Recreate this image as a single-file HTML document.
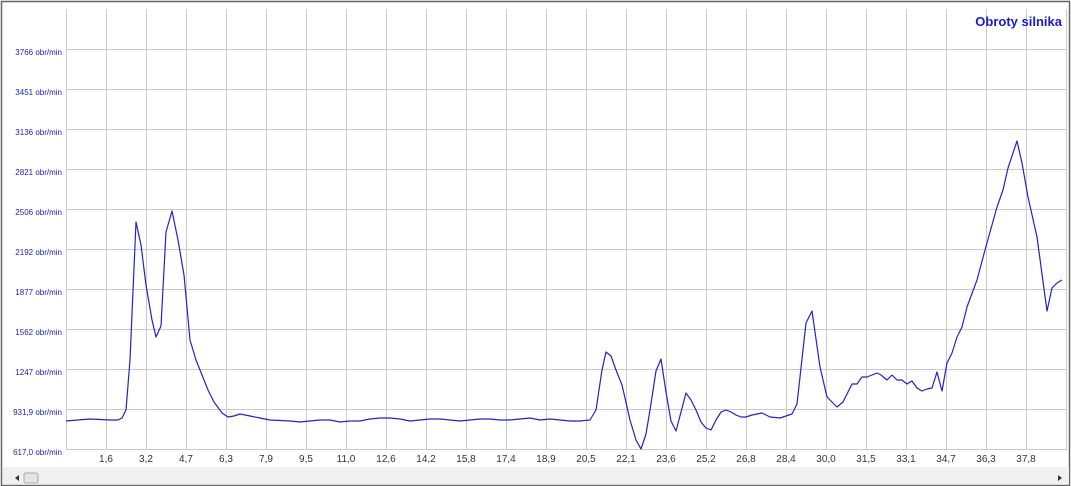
<!DOCTYPE html>
<html><head><meta charset="utf-8"><style>
body{margin:0;background:#fff;width:1071px;height:486px;overflow:hidden;font-family:"Liberation Sans",sans-serif}
</style></head><body>
<svg width="1071" height="486" xmlns="http://www.w3.org/2000/svg" style="position:absolute;left:0;top:0">
<rect x="1.5" y="1.5" width="1068" height="484" fill="#fff" stroke="#666" stroke-width="1.5"/>
<g stroke="#cbcbcb" stroke-width="1">
<line x1="66.5" y1="9" x2="66.5" y2="449"/><line x1="106.5" y1="9" x2="106.5" y2="449"/><line x1="146.5" y1="9" x2="146.5" y2="449"/><line x1="186.5" y1="9" x2="186.5" y2="449"/><line x1="226.5" y1="9" x2="226.5" y2="449"/><line x1="266.5" y1="9" x2="266.5" y2="449"/><line x1="306.5" y1="9" x2="306.5" y2="449"/><line x1="346.5" y1="9" x2="346.5" y2="449"/><line x1="386.5" y1="9" x2="386.5" y2="449"/><line x1="426.5" y1="9" x2="426.5" y2="449"/><line x1="466.5" y1="9" x2="466.5" y2="449"/><line x1="506.5" y1="9" x2="506.5" y2="449"/><line x1="546.5" y1="9" x2="546.5" y2="449"/><line x1="586.5" y1="9" x2="586.5" y2="449"/><line x1="626.5" y1="9" x2="626.5" y2="449"/><line x1="666.5" y1="9" x2="666.5" y2="449"/><line x1="706.5" y1="9" x2="706.5" y2="449"/><line x1="746.5" y1="9" x2="746.5" y2="449"/><line x1="786.5" y1="9" x2="786.5" y2="449"/><line x1="826.5" y1="9" x2="826.5" y2="449"/><line x1="866.5" y1="9" x2="866.5" y2="449"/><line x1="906.5" y1="9" x2="906.5" y2="449"/><line x1="946.5" y1="9" x2="946.5" y2="449"/><line x1="986.5" y1="9" x2="986.5" y2="449"/><line x1="1026.5" y1="9" x2="1026.5" y2="449"/><line x1="1066.5" y1="9" x2="1066.5" y2="449"/>
<line x1="66" y1="49.5" x2="1067" y2="49.5"/><line x1="66" y1="89.5" x2="1067" y2="89.5"/><line x1="66" y1="129.5" x2="1067" y2="129.5"/><line x1="66" y1="169.5" x2="1067" y2="169.5"/><line x1="66" y1="209.5" x2="1067" y2="209.5"/><line x1="66" y1="249.5" x2="1067" y2="249.5"/><line x1="66" y1="289.5" x2="1067" y2="289.5"/><line x1="66" y1="329.5" x2="1067" y2="329.5"/><line x1="66" y1="369.5" x2="1067" y2="369.5"/><line x1="66" y1="409.5" x2="1067" y2="409.5"/><line x1="66" y1="449.5" x2="1067" y2="449.5"/>
</g>
<g fill="#2020c0" font-size="8" text-anchor="end">
<text x="62" y="55">3766 obr/min</text><text x="62" y="95">3451 obr/min</text><text x="62" y="135">3136 obr/min</text><text x="62" y="175">2821 obr/min</text><text x="62" y="215">2506 obr/min</text><text x="62" y="255">2192 obr/min</text><text x="62" y="295">1877 obr/min</text><text x="62" y="335">1562 obr/min</text><text x="62" y="375">1247 obr/min</text><text x="62" y="415">931,9 obr/min</text><text x="62" y="455">617,0 obr/min</text>
</g>
<g fill="#333" font-size="10" text-anchor="middle">
<text x="106" y="462">1,6</text><text x="146" y="462">3,2</text><text x="186" y="462">4,7</text><text x="226" y="462">6,3</text><text x="266" y="462">7,9</text><text x="306" y="462">9,5</text><text x="346" y="462">11,0</text><text x="386" y="462">12,6</text><text x="426" y="462">14,2</text><text x="466" y="462">15,8</text><text x="506" y="462">17,4</text><text x="546" y="462">18,9</text><text x="586" y="462">20,5</text><text x="626" y="462">22,1</text><text x="666" y="462">23,6</text><text x="706" y="462">25,2</text><text x="746" y="462">26,8</text><text x="786" y="462">28,4</text><text x="826" y="462">30,0</text><text x="866" y="462">31,5</text><text x="906" y="462">33,1</text><text x="946" y="462">34,7</text><text x="986" y="462">36,3</text><text x="1026" y="462">37,8</text>
</g>
<text x="1062" y="26" fill="#1a1ad0" font-size="13" font-weight="bold" text-anchor="end">Obroty silnika</text>
<polyline fill="none" stroke="#2222cc" stroke-width="1.2" stroke-linejoin="round" points="66,421 90,419 110,420 118,420 122,418 126,410 130,360 136,222 141,245 146,285 152,320 156,337 161,326 166,232 172,211 178,240 184,275 190,340 196,360 202,375 208,390 214,402 222,413 228,417 234,416 240,414 250,416 260,418 270,420 290,421 300,422 310,421 320,420 330,420 340,422 350,421 360,421 370,419 380,418 390,418 400,419 410,421 420,420 430,419 440,419 450,420 460,421 470,420 480,419 490,419 500,420 510,420 520,419 530,418 540,420 550,419 560,420 570,421 580,421 590,420 596,410 602,370 606,352 611,356 616,370 622,385 630,420 636,440 641,449 646,434 650,410 656,371 661,359 666,392 671,421 676,431 681,412 686,393 691,400 696,410 701,422 706,428 711,430 716,420 721,412 726,410 731,412 736,415 741,417 746,417 752,415 762,413 770,417 780,418 792,414 797,404 806,323 812,311 820,367 827,397 837,407 843,402 852,384 857,384 862,377 867,377 877,373 881,375 887,380 892,375 897,380 902,380 907,384 912,381 917,388 922,391 927,389 932,388 937,372 942,391 947,363 952,353 957,337 962,327 967,307 977,280 985,250 997,207 1003,190 1008,168 1017,141 1022,163 1028,197 1037,237 1047,311 1052,288 1057,283 1062,280"/>
<rect x="3" y="467" width="1066" height="17" fill="#f0f0f0"/>
<rect x="24" y="473" width="14" height="10" rx="2" fill="#e4e4e4" stroke="#aaa"/>
<path d="M15 478 L19 475 L19 481 Z" fill="#333"/>
<path d="M1062 478 L1058 475 L1058 481 Z" fill="#333"/>
</svg>
</body></html>
